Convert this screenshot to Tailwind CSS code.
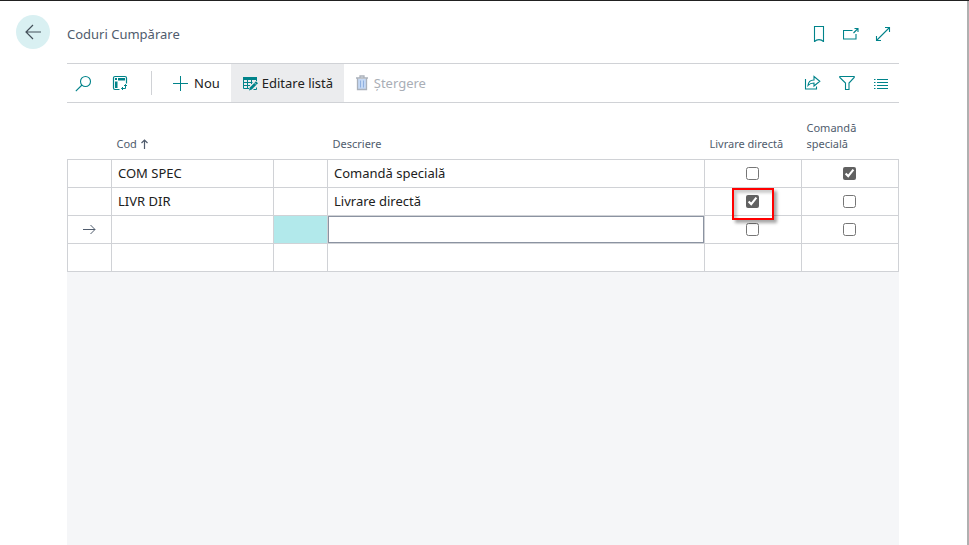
<!DOCTYPE html>
<html lang="ro">
<head>
    <meta charset="UTF-8">
    <meta name="viewport" content="width=device-width, initial-scale=1.0">
    <title>Coduri Cumpărare</title>
    <script src="https://cdn.jsdelivr.net/npm/@tailwindcss/browser@4"></script>
</head>
<body class="min-h-screen flex flex-col bg-white border-t border-[#212121] font-['Noto_Sans','Open_Sans',sans-serif] text-[13px] leading-5 text-[#212121]">
    <div class="flex-1 flex flex-col pl-4 pr-[68px] border-r-2 border-[#b0b0b0]">

        <!-- Page header -->
        <header class="flex items-center h-[62px]">
            <button type="button" aria-label="Înapoi" class="w-[34px] h-[34px] mr-[17px] rounded-full bg-[#d9f0f2] flex items-center justify-center">
                <svg class="w-4 h-4" viewBox="0 0 16 16" fill="none" stroke="#44505a" stroke-width="1.2">
                    <path d="M16 8H.8M8 1L1 8l7 7"/>
                </svg>
            </button>
            <h1 class="flex-1 pt-1 text-[#505c6d]">Coduri Cumpărare</h1>
            <div class="flex items-center gap-4 pt-1 pr-2">
                <button type="button" aria-label="Marcaj">
                    <svg class="w-4 h-4" viewBox="0 0 16 16" fill="none" stroke="#00838a" stroke-width="1.1">
                        <path d="M3.500.5h9v15c-2.500-2.500-6.500-2.500-9 0z"/>
                    </svg>
                </button>
                <button type="button" aria-label="Deschidere în fereastră nouă">
                    <svg class="w-4 h-4" viewBox="0 0 16 16" fill="none" stroke="#00838a" stroke-width="1.1">
                        <path d="M9.500 4.500h-9v8.500h12.500V8"/>
                        <path d="M10.500 7l4.500-4.500M11.500 2.500H15V6"/>
                    </svg>
                </button>
                <button type="button" aria-label="Extindere">
                    <svg class="w-4 h-4" viewBox="0 0 16 16" fill="none" stroke="#00838a" stroke-width="1.1">
                        <path d="M1.500 14.500l13-13M10 1.500h4.500V6M1.500 10v4.500H6"/>
                    </svg>
                </button>
            </div>
        </header>

        <main class="flex-1 flex flex-col ml-[51px]">
            <!-- Action bar -->
            <div class="flex items-center h-10 pl-2 pr-2.5 border-y border-[#d0d2d6]">
                <button type="button" aria-label="Căutare" class="mr-5">
                    <svg class="w-[17px] h-[17px]" viewBox="0 0 17 17" fill="none" stroke="#00838a" stroke-width="1.1">
                        <circle cx="10.500" cy="6.500" r="5"/>
                        <path d="M7 10L.8 16.200"/>
                    </svg>
                </button>
                <button type="button" aria-label="Analiză">
                    <svg class="w-4 h-4" viewBox="0 0 16 16" fill="none" stroke="#00838a">
                        <path d="M7.500 14.500H3a1.500 1.500 0 0 1-1.500-1.500V3A1.500 1.500 0 0 1 3 1.500h10A1.500 1.500 0 0 1 14.500 3v5.500" stroke-width="1.200"/>
                        <path d="M3 3h2v2H3zM6 3h7v2.500H6zM3 6.500h2.500V13H3z" fill="#00838a" stroke="none"/>
                        <path d="M13.500 9.500v4H9.500M12 11l1.500-1.500L15 11M11 12l-1.500 1.500L11 15"/>
                    </svg>
                </button>
                <div class="w-px h-6 bg-[#d0d2d6] ml-[23px] mr-2.5"></div>
                <button type="button" class="flex items-center gap-1.5 h-[38px] pl-2.5 pr-[11px]">
                    <svg class="w-4 h-4" viewBox="0 0 16 16" fill="none" stroke="#00838a">
                        <path d="M8.500 1v15M1 8.500h15"/>
                    </svg>
                    Nou
                </button>
                <button type="button" class="flex items-center gap-1 h-[38px] w-[113px] pl-3 bg-[#ebecee] whitespace-nowrap">
                    <svg class="w-[15px] h-[15px] shrink-0" viewBox="0 0 15 15" fill="none" stroke="#00838a">
                        <path d="M0 1h14v3H0z" fill="#00838a" stroke="none"/>
                        <path d="M.5 4v8.500H6M.5 6.500h9M.5 9.500h6.500M4.500 4v8.500M8.500 4v4M13.500 4v1"/>
                        <path d="M6 14.500l.8-3 6.200-6.200 2 2-6.200 6.200z" fill="#00838a" stroke="none"/>
                        <path d="M11.300 6.700l2 2" stroke="#ebecee" stroke-width=".7"/>
                        <path d="M10.500 13.500h3v-2"/>
                    </svg>
                    Editare listă
                </button>
                <button type="button" disabled class="flex items-center gap-1.5 h-[38px] pl-3 text-[#a9aeb6]">
                    <svg class="w-3 h-4" viewBox="0 0 12 16" fill="none" stroke="#aab1bb">
                        <path d="M2 4h8v10.500H2z" fill="#c5d9f5" stroke="none"/>
                        <path d="M0 3h12M4 2.500V1h4v1.500M1.500 3v11.500h9V3" stroke-width="1.300"/>
                        <path d="M4.500 5.500v7M7.500 5.500v7" stroke="#8fb0e0"/>
                    </svg>
                    Ștergere
                </button>
                <div class="flex-1"></div>
                <div class="flex items-center gap-[18px]">
                    <button type="button" aria-label="Partajare">
                        <svg class="w-[17px] h-4" viewBox="0 0 17 16" fill="none" stroke="#00838a" stroke-width="1.1">
                            <path d="M1.500 4v10h11v-2.500"/>
                            <path d="M4 10.500c.3-4 2.500-5.500 6-5.500V1.500l5.800 4.800L10 11V8C7.500 8 5.500 8.700 4 10.500z"/>
                        </svg>
                    </button>
                    <button type="button" aria-label="Filtrare">
                        <svg class="w-4 h-4" viewBox="0 0 16 16" fill="none" stroke="#00838a" stroke-width="1.1">
                            <path d="M.8 1.500h14.400v1L10 8v6.500H6.500V8L.8 2.500z"/>
                        </svg>
                    </button>
                    <button type="button" aria-label="Listă">
                        <svg class="w-4 h-4" viewBox="0 0 16 16" fill="none" stroke="#00838a">
                            <path d="M1 4.500h1.500M4 4.500h11M1 7.500h1.500M4 7.500h11M1 10.500h1.500M4 10.500h11M1 13.500h1.500M4 13.500h11"/>
                        </svg>
                    </button>
                </div>
            </div>

            <!-- List -->
            <div class="flex-1 bg-[#f5f6f8]">
                <table class="w-full table-fixed border-collapse bg-white">
                    <colgroup>
                        <col class="w-11">
                        <col class="w-[162px]">
                        <col class="w-[54px]">
                        <col>
                        <col class="w-[97px]">
                        <col class="w-[97px]">
                    </colgroup>
                    <thead>
                        <tr class="h-14 text-[11px] leading-4 text-[#505c6d] text-left align-bottom">
                            <th></th>
                            <th class="px-[5px] pb-[7px] font-normal">
                                <span class="flex items-center gap-1">Cod
                                    <svg class="w-[7px] h-[10px]" viewBox="0 0 7 10" fill="none" stroke="#505c6d" stroke-width="1.2">
                                        <path d="M3.500 10V1M.5 4l3-3 3 3"/>
                                    </svg>
                                </span>
                            </th>
                            <th></th>
                            <th class="px-[5px] pb-[7px] font-normal">Descriere</th>
                            <th id="livrare" class="px-[5px] pb-[7px] font-normal whitespace-nowrap">Livrare directă</th>
                            <th id="comanda" class="px-[5px] pb-[7px] font-normal">Comandă<br>specială</th>
                        </tr>
                    </thead>
                    <tbody>
                        <tr class="h-7">
                            <td class="border border-[#d0d2d6]"></td>
                            <td class="border border-[#d0d2d6] px-1.5">COM SPEC</td>
                            <td class="border border-[#d0d2d6]"></td>
                            <td class="border border-[#d0d2d6] px-1.5">Comandă specială</td>
                            <td class="border border-[#d0d2d6] pr-0.5"><input type="checkbox" aria-labelledby="livrare" class="block mx-auto w-[13px] h-[13px] accent-[#616161]"></td>
                            <td class="border border-[#d0d2d6] pr-0.5"><input type="checkbox" aria-labelledby="comanda" checked class="block mx-auto w-[13px] h-[13px] accent-[#616161]"></td>
                        </tr>
                        <tr class="h-7">
                            <td class="border border-[#d0d2d6]"></td>
                            <td class="border border-[#d0d2d6] px-1.5">LIVR DIR</td>
                            <td class="border border-[#d0d2d6]"></td>
                            <td class="border border-[#d0d2d6] px-1.5">Livrare directă</td>
                            <td class="border border-[#d0d2d6] pr-0.5 relative">
                                <input type="checkbox" aria-labelledby="livrare" checked class="block mx-auto w-[13px] h-[13px] accent-[#616161]">
                                <span class="absolute left-[27px] top-0 w-[42px] h-8 border-2 border-[#ff0000] shadow-[3px_3px_3px_rgba(0,0,0,0.35),inset_3px_3px_3px_rgba(0,0,0,0.2)] pointer-events-none"></span>
                            </td>
                            <td class="border border-[#d0d2d6] pr-0.5"><input type="checkbox" aria-labelledby="comanda" class="block mx-auto w-[13px] h-[13px] accent-[#616161]"></td>
                        </tr>
                        <tr class="h-7">
                            <td class="border border-[#d0d2d6]">
                                <svg class="block mx-auto w-[13px] h-[11px]" viewBox="0 0 13 11" fill="none" stroke="#505c6d">
                                    <path d="M0 5.500h12M7.500 1L12 5.500 7.500 10"/>
                                </svg>
                            </td>
                            <td class="border border-[#d0d2d6]"></td>
                            <td class="border border-[#d0d2d6] bg-[#b2e9eb]"></td>
                            <td class="border border-[#d0d2d6] p-0"><input type="text" aria-label="Descriere" class="block w-full h-[27px] px-1.5 border border-[#8b93a1] outline-none"></td>
                            <td class="border border-[#d0d2d6] pr-0.5"><input type="checkbox" aria-labelledby="livrare" class="block mx-auto w-[13px] h-[13px] accent-[#616161]"></td>
                            <td class="border border-[#d0d2d6] pr-0.5"><input type="checkbox" aria-labelledby="comanda" class="block mx-auto w-[13px] h-[13px] accent-[#616161]"></td>
                        </tr>
                        <tr class="h-7">
                            <td class="border border-[#d0d2d6]"></td>
                            <td class="border border-[#d0d2d6]"></td>
                            <td class="border border-[#d0d2d6]"></td>
                            <td class="border border-[#d0d2d6]"></td>
                            <td class="border border-[#d0d2d6]"></td>
                            <td class="border border-[#d0d2d6]"></td>
                        </tr>
                    </tbody>
                </table>
            </div>
        </main>
    </div>
</body>
</html>
